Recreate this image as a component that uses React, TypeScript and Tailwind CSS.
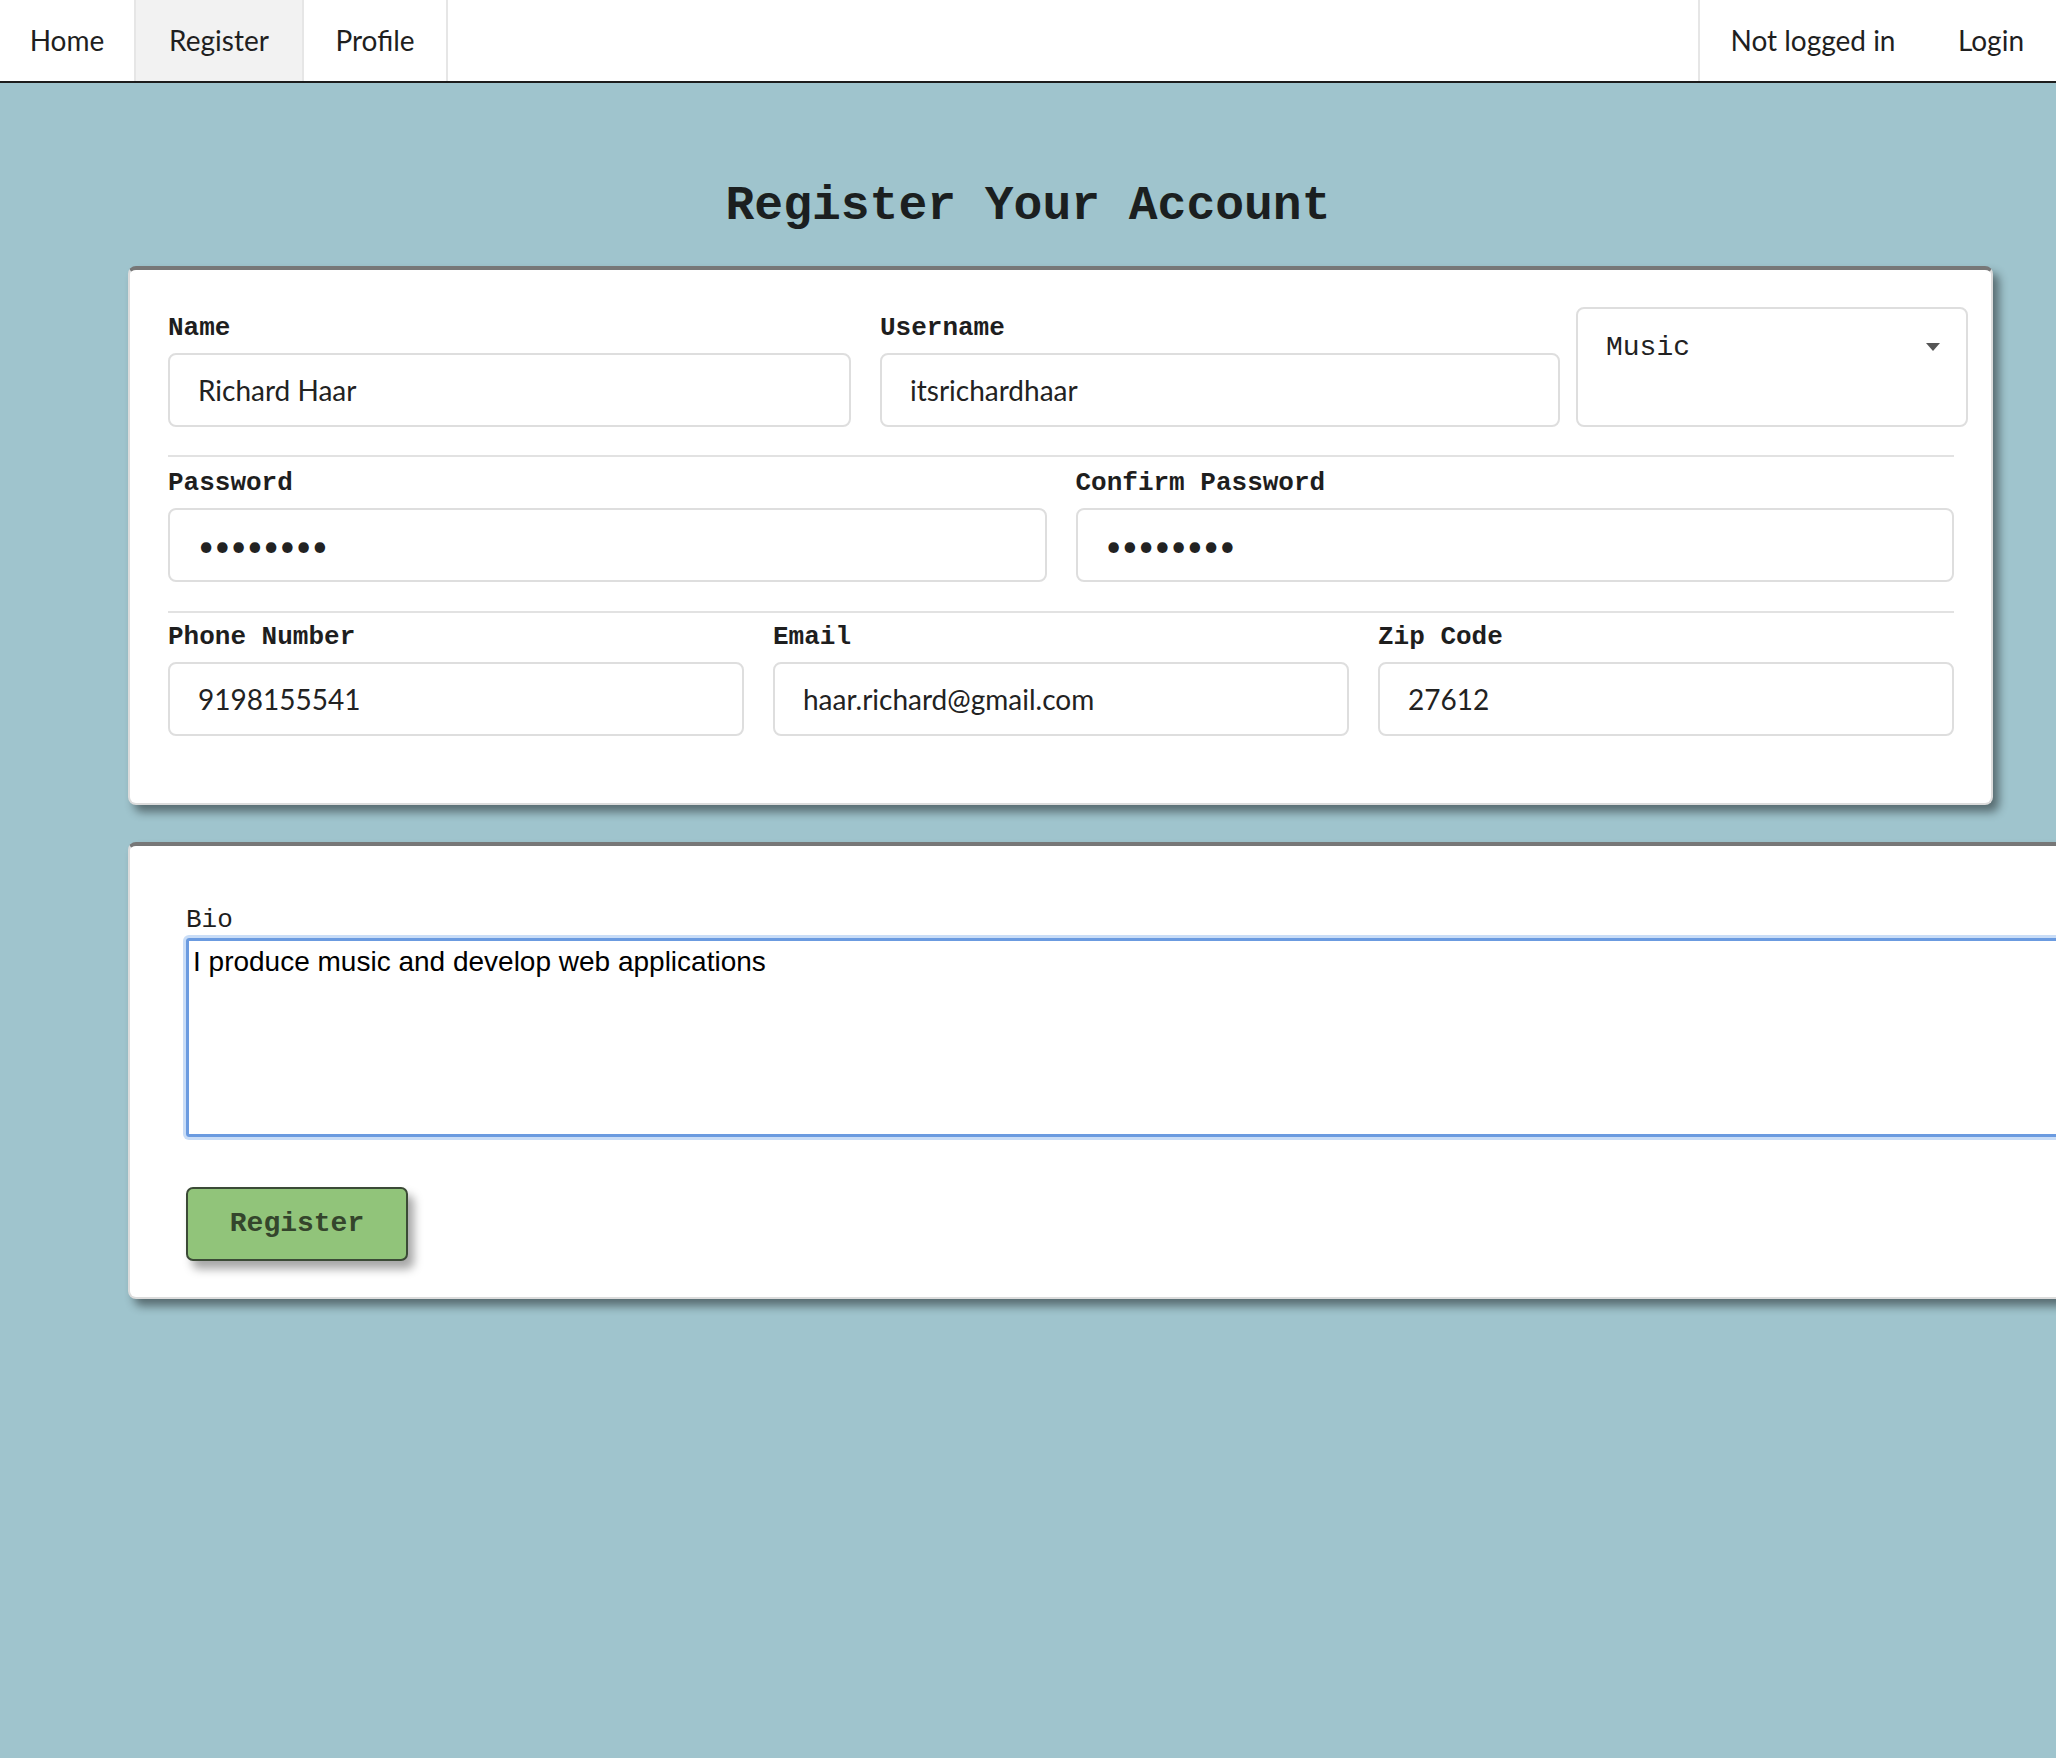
import React from "react";

const lato = { fontFamily: "Lato, 'Open Sans', sans-serif" };

function NavItem({ label, w, active, sep = true }: { label: string; w: string; active?: boolean; sep?: boolean }) {
  return (
    <div
      className={`h-full flex items-center justify-center pb-[2px] text-[28px] text-[#1f1f1f] ${w} ${sep ? "border-r-2 border-[#e6e6e6]" : ""} ${active ? "bg-[#f2f2f2]" : ""}`}
    >
      {label}
    </div>
  );
}

function Field({ label, value, type = "text" }: { label: string; value: string; type?: string }) {
  return (
    <div className="flex flex-col min-w-0">
      <div className="h-[30px] leading-[30px] text-[26px] font-bold text-[#1e1e1e] mb-[10px] font-['Liberation_Mono',monospace]">
        {label}
      </div>
      <input
        readOnly
        type={type}
        value={value}
        className="h-[74px] w-full border-2 border-[#dedede] rounded-[8px] px-[28px] text-[28px] text-[#222] bg-white outline-none font-['Lato',sans-serif]"
      />
    </div>
  );
}

export default function App() {
  return (
    <div className="w-full min-h-screen bg-[#9fc4cd] overflow-hidden">
      {/* Nav */}
      <div className="h-[83px] bg-white border-b-2 border-[#1d1d1d] flex" style={lato}>
        <NavItem label="Home" w="w-[136px]" />
        <NavItem label="Register" w="w-[168px]" active />
        <NavItem label="Profile" w="w-[144px]" />
        <div className="ml-auto flex h-full border-l-2 border-[#e6e6e6]">
          <NavItem label="Not logged in" w="w-[226px]" sep={false} />
          <NavItem label="Login" w="w-[130px]" sep={false} />
        </div>
      </div>

      {/* Title */}
      <h1 className="mt-[95px] h-[56px] leading-[56px] text-center text-[48px] font-bold text-[#1b1f20] font-['Liberation_Mono',monospace]">
        Register Your Account
      </h1>

      {/* Card 1 */}
      <div className="mt-[32px] ml-[128px] w-[1865px] bg-white border-2 border-[#dcdcdc] border-t-[4px] border-t-[#777777] rounded-[8px] shadow-[6px_7px_10px_rgba(0,0,0,0.45)] pl-[38px] pr-[37px] pt-[43px] pb-[67px]">
        {/* Row 1 */}
        <div className="flex items-start">
          <div className="w-[683px] shrink-0">
            <Field label="Name" value="Richard Haar" />
          </div>
          <div className="w-[680px] shrink-0 ml-[29px]">
            <Field label="Username" value="itsrichardhaar" />
          </div>
          <div className="w-[392px] shrink-0 ml-[16px] -mt-[6px] h-[120px] border-2 border-[#dedede] rounded-[8px] pl-[28px] pr-[28px] pt-[23px] flex items-start justify-between">
            <span className="text-[28px] leading-[32px] text-[#222] font-['Liberation_Mono',monospace]">Music</span>
            <svg width="14" height="8" viewBox="0 0 14 8" className="mt-[11px] -mr-[2px]">
              <path d="M0 0 L14 0 L7 8 Z" fill="#555" />
            </svg>
          </div>
        </div>

        <div className="h-[2px] bg-[#e2e2e2] mt-[28px] mb-[11px]" />

        {/* Row 2 */}
        <div className="grid grid-cols-2 gap-x-[29px]">
          <Field label="Password" value="12345678" type="password" />
          <Field label="Confirm Password" value="12345678" type="password" />
        </div>

        <div className="h-[2px] bg-[#e2e2e2] mt-[29px] mb-[9px]" />

        {/* Row 3 */}
        <div className="grid grid-cols-3 gap-x-[29px]">
          <Field label="Phone Number" value="9198155541" />
          <Field label="Email" value="haar.richard@gmail.com" />
          <Field label="Zip Code" value="27612" />
        </div>
      </div>

      {/* Card 2 */}
      <div className="mt-[37px] ml-[128px] w-[2100px] bg-white border-2 border-[#dcdcdc] border-t-[4px] border-t-[#777777] rounded-[8px] shadow-[6px_7px_10px_rgba(0,0,0,0.45)] pl-[56px] pt-[59px] pb-[36px]">
        <div className="h-[30px] leading-[30px] text-[26px] text-[#1e1e1e] mb-[3px] font-['Liberation_Mono',monospace]">Bio</div>
        <textarea
          readOnly
          value="I produce music and develop web applications"
          className="block w-[2000px] h-[199px] border-[3px] border-[#6b9be0] rounded-[3px] shadow-[0_0_0_3px_#c9ddf7] px-[4px] py-[5px] text-[28px] leading-[32px] text-black resize-none outline-none font-['Liberation_Sans',Arial,sans-serif]"
        />
        <button className="mt-[50px] w-[222px] h-[74px] bg-[#91c47a] border-2 border-[#3b4a36] rounded-[7px] shadow-[6px_8px_10px_rgba(0,0,0,0.35)] text-[28px] font-bold text-[#34452c] font-['Liberation_Mono',monospace]">
          Register
        </button>
      </div>
    </div>
  );
}
